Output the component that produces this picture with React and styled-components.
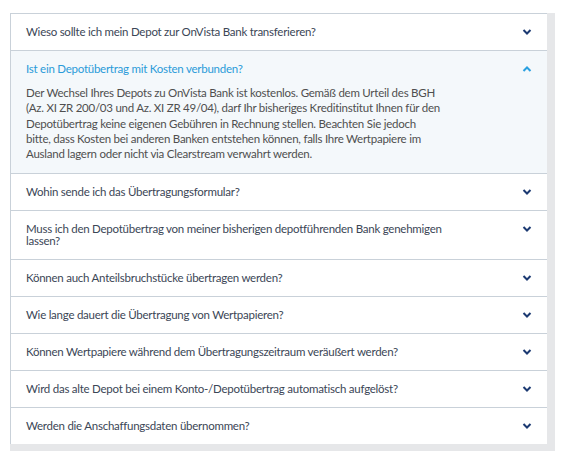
import React, { useState } from "react"
import styled, { createGlobalStyle } from "styled-components"

const GlobalStyle = createGlobalStyle`
    body {
        margin: 0;
        background: #ffffff;
        font-family: "Lato", "Liberation Sans", sans-serif;
    }
`

const Page = styled.div`
    padding: 13px 0 0 10px;
    width: 545px;
`

const Shadow = styled.div`
    background-color: #e6e7e9;
    padding: 0 8px 7px 0;
`

const List = styled.div`
    background-color: #ffffff;
    border-left: 1px solid #c9d1d9;
    border-top: 1px solid #c9d1d9;
`

const Item = styled.div`
    border-bottom: 1px solid #c9d1d9;
    background-color: ${(props) => (props.open ? "#f4f8fb" : "#ffffff")};

    &:last-child {
        border-bottom: none;
    }
`

const Question = styled.div`
    display: flex;
    justify-content: space-between;
    align-items: flex-start;
    padding: 12px 15px 12px 15px;
    cursor: pointer;
`

const QuestionText = styled.div`
    width: 420px;
    font-size: 11.5px;
    letter-spacing: -0.25px;
    line-height: 12px;
    color: ${(props) => (props.open ? "#2a9bd9" : "#3b4656")};
`

const Chevron = styled.svg`
    flex-shrink: 0;
    margin-top: 2px;
    width: 10px;
    height: 8px;
`

const Answer = styled.div`
    width: 417px;
    margin-top: -2px;
    padding: 0 15px 12px 15px;
    font-size: 11.5px;
    letter-spacing: -0.25px;
    line-height: 15.3px;
    color: #4f4f4f;
`

const faqs = [
    { q: "Wieso sollte ich mein Depot zur OnVista Bank transferieren?" },
    {
        q: "Ist ein Depotübertrag mit Kosten verbunden?",
        a: "Der Wechsel Ihres Depots zu OnVista Bank ist kostenlos. Gemäß dem Urteil des BGH (Az. XI ZR 200/03 und Az. XI ZR 49/04), darf Ihr bisheriges Kreditinstitut Ihnen für den Depotübertrag keine eigenen Gebühren in Rechnung stellen. Beachten Sie jedoch bitte, dass Kosten bei anderen Banken entstehen können, falls Ihre Wertpapiere im Ausland lagern oder nicht via Clearstream verwahrt werden.",
    },
    { q: "Wohin sende ich das Übertragungsformular?" },
    { q: "Muss ich den Depotübertrag von meiner bisherigen depotführenden Bank genehmigen lassen?" },
    { q: "Können auch Anteilsbruchstücke übertragen werden?" },
    { q: "Wie lange dauert die Übertragung von Wertpapieren?" },
    { q: "Können Wertpapiere während dem Übertragungszeitraum veräußert werden?" },
    { q: "Wird das alte Depot bei einem Konto-/Depotübertrag automatisch aufgelöst?" },
    { q: "Werden die Anschaffungsdaten übernommen?" },
]

const Arrow = ({ open }) => (
    <Chevron viewBox="0 0 10 8">
        <path
            d={open ? "M1.5 6 L5 2.5 L8.5 6" : "M1.5 2 L5 5.5 L8.5 2"}
            fill="none"
            stroke={open ? "#2aa0e0" : "#1c3a72"}
            strokeWidth="2"
        />
    </Chevron>
)

const App = () => {
    const [openIndex, setOpenIndex] = useState(1)

    return (
        <Page>
            <GlobalStyle />
            <Shadow>
                <List>
                    {faqs.map((faq, i) => {
                        const open = i === openIndex
                        return (
                            <Item key={i} open={open}>
                                <Question onClick={() => setOpenIndex(open ? -1 : i)}>
                                    <QuestionText open={open}>{faq.q}</QuestionText>
                                    <Arrow open={open} />
                                </Question>
                                {open && faq.a && <Answer>{faq.a}</Answer>}
                            </Item>
                        )
                    })}
                </List>
            </Shadow>
        </Page>
    )
}

export default App
